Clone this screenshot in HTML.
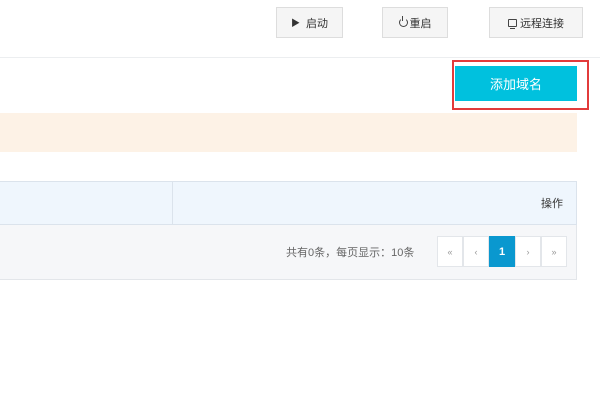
<!DOCTYPE html>
<html><head><meta charset="utf-8"><style>
*{margin:0;padding:0;box-sizing:border-box}
body{width:600px;height:400px;background:#fff;position:relative;overflow:hidden;font-family:"Liberation Sans","Noto Sans CJK SC",sans-serif;font-size:12px;color:#333}
.a{position:absolute}
.btn{position:absolute;top:7px;height:31px;background:#f5f5f5;border:1px solid #ddd;display:flex;align-items:center;justify-content:center;font-size:11px;color:#333}
.pg{position:absolute;top:236px;height:31px;width:26px;border:1px solid #e3e6ea;background:#fff;color:#999;font-size:9px;display:flex;align-items:center;justify-content:center}
</style></head><body>
<div class="btn" style="left:276px;width:67px"><span style="font-size:9px;margin-right:6px">▶</span>启动</div>
<div class="btn" style="left:382px;width:66px"><span style="display:inline-block;width:9px;height:9px;border:1.2px solid #444;border-top-color:transparent;border-radius:50%;position:relative;margin-right:2px"><span style="position:absolute;left:2.5px;top:-3px;width:1.2px;height:5px;background:#444"></span></span>重启</div>
<div class="btn" style="left:489px;width:94px"><span style="display:inline-block;width:9px;height:8px;border:1.2px solid #444;border-radius:1px;margin-right:3px;position:relative"><span style="position:absolute;left:1px;bottom:-3px;width:5px;height:1px;background:#444"></span></span>远程连接</div>
<div class="a" style="left:0;top:57px;width:600px;height:1px;background:#eceef0"></div>
<div class="a" style="left:452px;top:60px;width:137px;height:50px;border:2px solid #e23b3b"></div>
<div class="a" style="left:455px;top:66px;width:122px;height:35px;background:#00c1de;color:#fff;font-size:13px;display:flex;align-items:center;justify-content:center">添加域名</div>
<div class="a" style="left:0;top:113px;width:577px;height:39px;background:#fdf2e6"></div>
<div class="a" style="left:0;top:181px;width:577px;height:44px;background:#eff6fd;border-top:1px solid #dbe3ec;border-bottom:1px solid #dbe3ec;border-right:1px solid #dbe3ec"></div>
<div class="a" style="left:172px;top:181px;width:1px;height:44px;background:#dbe3ec"></div>
<div class="a" style="left:541px;top:195px;font-size:11px;color:#333">操作</div>
<div class="a" style="left:0;top:225px;width:577px;height:55px;background:#f6f7f9;border-bottom:1px solid #e3e6ea;border-right:1px solid #e3e6ea"></div>
<div class="a" style="left:286px;top:244px;font-size:11px;color:#666">共有0条，每页显示：10条</div>
<div class="pg" style="left:437px">«</div>
<div class="pg" style="left:463px">‹</div>
<div class="pg" style="left:489px;background:#0a98cf;border-color:#0a98cf;color:#fff;font-size:11px;font-weight:bold">1</div>
<div class="pg" style="left:515px">›</div>
<div class="pg" style="left:541px">»</div>
</body></html>
